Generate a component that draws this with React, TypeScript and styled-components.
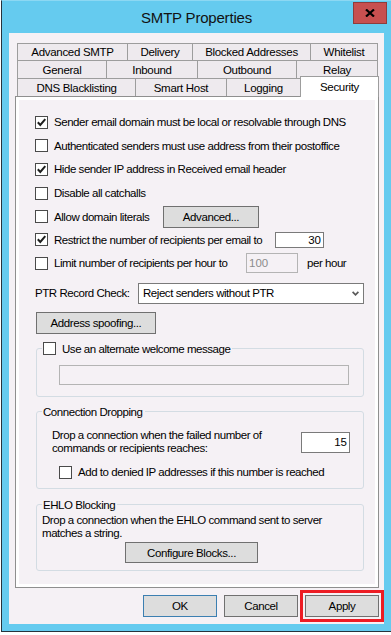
import React from 'react';
import styled, { createGlobalStyle } from 'styled-components';

const GlobalStyle = createGlobalStyle`
	html,
	body {
		margin: 0;
		padding: 0;
		background: #ffffff;
		overflow: hidden;
	}
	body {
		font-family: 'Liberation Sans', Arial, sans-serif;
		font-size: 11.5px;
		color: #000000;
	}
`;

const Window = styled.div`
	box-sizing: border-box;
	width: 391px;
	height: 632px;
	margin-left: 1px;
	display: flex;
	flex-direction: column;
	background: #65cbef;
	border: 1px solid #26333d;
	border-top-color: #8cd8f3;
`;

const TitleBar = styled.div`
	height: 32px;
	flex: none;
	display: grid;
	grid-template-columns: 1fr auto 1fr;
	align-items: start;
`;

const Title = styled.div`
	grid-column: 2;
	padding-top: 8px;
	font-size: 15px;
	line-height: 18px;
	letter-spacing: -0.2px;
	color: #121212;
	white-space: nowrap;
`;

const CloseButton = styled.div`
	grid-column: 3;
	justify-self: end;
	box-sizing: border-box;
	width: 34px;
	height: 22px;
	margin: 1px 4px 0 0;
	background: #c75050;
	border: 1px solid #8e3c3c;
	display: flex;
	align-items: center;
	justify-content: center;
`;

const Client = styled.div`
	flex: 1;
	margin: 0 7px 7px;
	padding: 10px 5px 0 6px;
	background: #f5f1f5;
	display: flex;
	flex-direction: column;
`;

const TabRow = styled.div<{ $h: number }>`
	display: flex;
	align-items: flex-start;
	height: ${p => p.$h}px;
	margin-left: 2px;
`;

const Tab = styled.div<{ $w: number }>`
	box-sizing: border-box;
	flex: none;
	width: ${p => p.$w}px;
	height: 100%;
	display: flex;
	align-items: center;
	justify-content: center;
	background: #eeeaee;
	border: 1px solid #9d9d9d;
	border-bottom: none;
	border-right: none;
	letter-spacing: -0.3px;
	white-space: nowrap;

	&:last-child {
		border-right: 1px solid #9d9d9d;
	}
`;

const ActiveTab = styled(Tab)`
	position: relative;
	z-index: 1;
	height: 21px;
	margin-top: -2px;
	padding-bottom: 1px;
	background: #ffffff;
	border-right: 1px solid #9d9d9d;
`;

const Panel = styled.div`
	box-sizing: border-box;
	flex: none;
	width: 364px;
	height: 492px;
	padding: 3px;
	background: #ffffff;
	border: 1px solid #8f8f8f;
`;

const Page = styled.div`
	box-sizing: border-box;
	height: 100%;
	padding: 10px 11px 0 16px;
	background: #f5f1f5;
	display: flex;
	flex-direction: column;
	letter-spacing: -0.45px;
`;

const OptionRow = styled.div<{ $h: number }>`
	display: flex;
	align-items: center;
	height: ${p => p.$h}px;
	flex: none;
	white-space: nowrap;
`;

const CheckLabel = styled.label<{ $w?: number }>`
	flex: none;
	display: inline-flex;
	align-items: center;
	gap: 6px;
	width: ${p => (p.$w ? `${p.$w}px` : 'auto')};
	white-space: nowrap;
`;

const Box = styled.span`
	box-sizing: border-box;
	flex: none;
	width: 13px;
	height: 13px;
	background: #ffffff;
	border: 1px solid #4a4a4a;
	display: inline-flex;
	align-items: center;
	justify-content: center;
`;

const Button = styled.button<{ $w: number; $h: number; $default?: boolean }>`
	box-sizing: border-box;
	flex: none;
	width: ${p => p.$w}px;
	height: ${p => p.$h}px;
	padding: 0;
	font-family: inherit;
	font-size: 11.5px;
	letter-spacing: -0.4px;
	color: #000000;
	background: #dddddd;
	border: 1px solid ${p => (p.$default ? '#3c7fb1' : '#707070')};
	border-radius: 0;
`;

const NumberBox = styled.input<{ $w: number; $h: number; $disabled?: boolean }>`
	box-sizing: border-box;
	flex: none;
	width: ${p => p.$w}px;
	height: ${p => p.$h}px;
	margin: 0;
	padding: 0 2px;
	font-family: inherit;
	font-size: 11.5px;
	text-align: ${p => (p.$disabled ? 'left' : 'right')};
	color: ${p => (p.$disabled ? '#8c8c8c' : '#000000')};
	background: ${p => (p.$disabled ? '#f5f1f5' : '#ffffff')};
	border: 1px solid ${p => (p.$disabled ? '#b4b4b4' : '#7a7a7a')};
	border-radius: 0;
	outline: none;
`;

const Unit = styled.span`
	margin-left: 9px;
`;

const SelectRow = styled.div`
	display: flex;
	align-items: center;
	height: 20px;
	margin-top: 8px;
	flex: none;
`;

const SelectLabel = styled.span`
	width: 103px;
	flex: none;
	white-space: nowrap;
`;

const Select = styled.div`
	box-sizing: border-box;
	width: 226px;
	height: 21px;
	padding: 0 4px 0 4px;
	display: flex;
	align-items: center;
	justify-content: space-between;
	background: #ffffff;
	border: 1px solid #7a7a7a;
	white-space: nowrap;
`;

const SpoofButton = styled(Button)`
	margin: 9px 0 0 1px;
`;

const Group = styled.fieldset<{ $gap: number; $pad: string }>`
	box-sizing: border-box;
	flex: none;
	width: 328px;
	min-width: 0;
	margin: ${p => p.$gap}px 0 0 1px;
	padding: ${p => p.$pad};
	border: 1px solid #d3dce3;
	border-radius: 3px;
`;

const Legend = styled.legend`
	display: flex;
	align-items: center;
	gap: 6px;
	height: 15px;
	padding: 0 2px 0 1px;
	white-space: nowrap;
`;

const WideBox = styled.input`
	box-sizing: border-box;
	display: block;
	width: 290px;
	height: 20px;
	margin: 0 0 0 17px;
	background: #f5f1f5;
	border: 1px solid #b4b4b4;
	border-radius: 0;
	outline: none;
`;

const DropRow = styled.div`
	display: flex;
	align-items: center;
	justify-content: space-between;
	margin-left: 10px;
	padding-right: 13px;
`;

const Para = styled.div`
	line-height: 13px;
`;

const SubRow = styled(OptionRow)`
	margin-top: 7px;
	padding-left: 17px;
`;

const BlocksButton = styled(Button)`
	display: block;
	margin: 2px 0 0 83px;
`;

const ButtonBar = styled.div`
	display: flex;
	justify-content: flex-end;
	gap: 7px;
	margin-top: 7px;
`;

const Highlight = styled.div`
	position: relative;
	display: flex;

	&::after {
		content: '';
		position: absolute;
		inset: -5px;
		border: 3px solid #ed1c24;
		pointer-events: none;
	}
`;

const Tick = () => (
	<svg width="11" height="11" viewBox="0 0 11 11">
		<path d="M1.8 5.2 L4.3 7.9 L9.3 2.2" fill="none" stroke="#1e1e1e" strokeWidth="2" />
	</svg>
);

const Check: React.FC<{ checked?: boolean; w?: number; children: React.ReactNode }> = ({ checked, w, children }) => (
	<CheckLabel $w={w}>
		<Box>{checked && <Tick />}</Box>
		<span>{children}</span>
	</CheckLabel>
);

const tabRows = [
	{ h: 17, tabs: [['Advanced SMTP', 110], ['Delivery', 65], ['Blocked Addresses', 118], ['Whitelist', 68]] },
	{ h: 18, tabs: [['General', 89], ['Inbound', 91], ['Outbound', 99], ['Relay', 82]] },
] as const;

export default function App() {
	return (
		<>
			<GlobalStyle />
			<Window>
				<TitleBar>
					<Title>SMTP Properties</Title>
					<CloseButton>
						<svg width="10" height="8" viewBox="0 0 10 8">
							<path d="M1 0.5 L9 7.5 M9 0.5 L1 7.5" stroke="#000" strokeWidth="2.2" />
						</svg>
					</CloseButton>
				</TitleBar>
				<Client>
					{tabRows.map(row => (
						<TabRow key={row.tabs[0][0]} $h={row.h}>
							{row.tabs.map(([label, w]) => (
								<Tab key={label} $w={w}>
									{label}
								</Tab>
							))}
						</TabRow>
					))}
					<TabRow $h={18}>
						<Tab $w={118}>DNS Blacklisting</Tab>
						<Tab $w={91}>Smart Host</Tab>
						<Tab $w={74}>Logging</Tab>
						<ActiveTab $w={79}>Security</ActiveTab>
					</TabRow>

					<Panel>
						<Page>
							<OptionRow $h={24}>
								<Check checked>Sender email domain must be local or resolvable through DNS</Check>
							</OptionRow>
							<OptionRow $h={23}>
								<Check>Authenticated senders must use address from their postoffice</Check>
							</OptionRow>
							<OptionRow $h={24}>
								<Check checked>Hide sender IP address in Received email header</Check>
							</OptionRow>
							<OptionRow $h={24}>
								<Check>Disable all catchalls</Check>
							</OptionRow>
							<OptionRow $h={23}>
								<Check w={128}>Allow domain literals</Check>
								<Button $w={96} $h={22}>
									Advanced...
								</Button>
							</OptionRow>
							<OptionRow $h={23}>
								<Check checked w={240}>
									Restrict the number of recipients per email to
								</Check>
								<NumberBox $w={49} $h={16} readOnly value="30" />
							</OptionRow>
							<OptionRow $h={24}>
								<Check w={211}>Limit number of recipients per hour to</Check>
								<NumberBox $w={52} $h={20} $disabled readOnly value="100" />
								<Unit>per hour</Unit>
							</OptionRow>

							<SelectRow>
								<SelectLabel>PTR Record Check:</SelectLabel>
								<Select>
									<span>Reject senders without PTR</span>
									<svg width="7" height="5" viewBox="0 0 7 5">
										<path d="M0.6 0.8 L3.5 3.8 L6.4 0.8" fill="none" stroke="#5a5a5a" strokeWidth="1.7" />
									</svg>
								</Select>
							</SelectRow>

							<SpoofButton $w={120} $h={22}>
								Address spoofing...
							</SpoofButton>

							<Group $gap={7} $pad="9px 0 11px 5px">
								<Legend>
									<Box />
									<span>Use an alternate welcome message</span>
								</Legend>
								<WideBox readOnly />
							</Group>

							<Group $gap={7} $pad="10px 0 6px 5px">
								<Legend>Connection Dropping</Legend>
								<DropRow>
									<Para>
										Drop a connection when the failed number of
										<br />
										commands or recipients reaches:
									</Para>
									<NumberBox $w={49} $h={21} readOnly value="15" />
								</DropRow>
								<SubRow $h={20}>
									<Check>Add to denied IP addresses if this number is reached</Check>
								</SubRow>
							</Group>

							<Group $gap={8} $pad="2px 0 7px 5px">
								<Legend>EHLO Blocking</Legend>
								<Para>
									Drop a connection when the EHLO command sent to server
									<br />
									matches a string.
								</Para>
								<BlocksButton $w={133} $h={21}>
									Configure Blocks...
								</BlocksButton>
							</Group>
						</Page>
					</Panel>

					<ButtonBar>
						<Button $w={74} $h={22} $default>
							OK
						</Button>
						<Button $w={74} $h={22}>
							Cancel
						</Button>
						<Highlight>
							<Button $w={74} $h={22}>
								Apply
							</Button>
						</Highlight>
					</ButtonBar>
				</Client>
			</Window>
		</>
	);
}
